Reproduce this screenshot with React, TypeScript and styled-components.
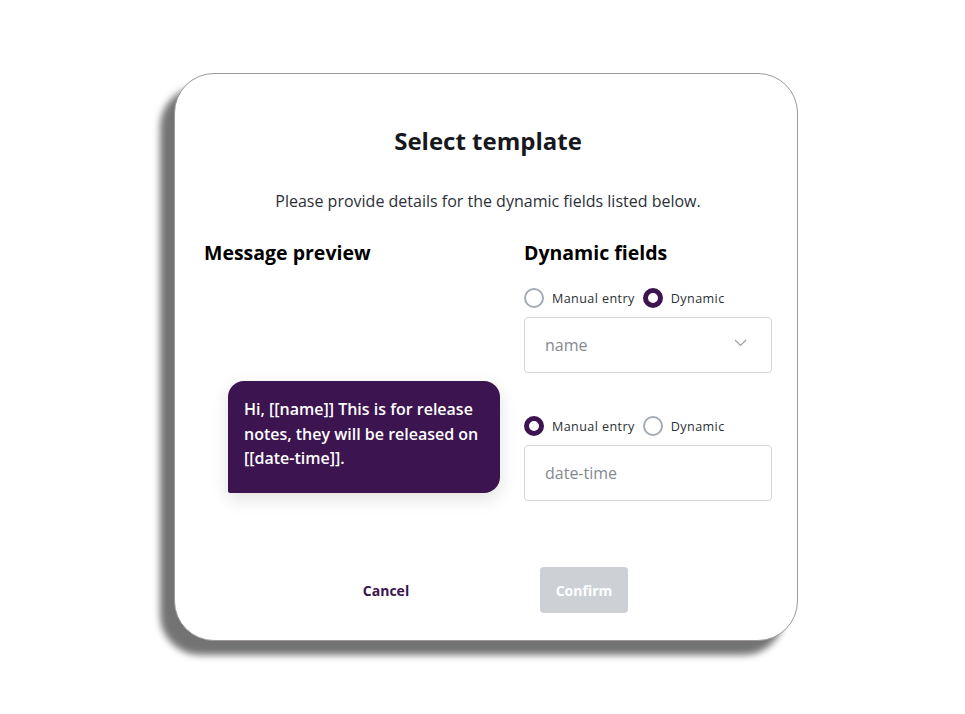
import React, { useState } from "react";
import styled, { createGlobalStyle } from "styled-components";

const GlobalStyle = createGlobalStyle`
  html, body {
    margin: 0;
    padding: 0;
    background: #ffffff;
    font-family: "Open Sans", "Noto Sans", sans-serif;
  }
`;

const Page = styled("div")`
  height: 714px;
  display: flex;
  align-items: center;
  justify-content: center;
  padding-left: 7px;
  box-sizing: border-box;
`;

const Modal = styled("div")`
  width: 624px;
  height: 568px;
  box-sizing: border-box;
  background: #ffffff;
  border: 1px solid #9d979b;
  border-radius: 40px;
  box-shadow: -14px 14px 7px rgba(0, 0, 0, 0.55);
  padding: 51px 25px 0 29px;
  display: flex;
  flex-direction: column;
`;

const Title = styled("h1")`
  margin: 0;
  text-align: center;
  font-size: 24px;
  line-height: 32px;
  font-weight: 700;
  color: #16181d;
`;

const Subtitle = styled("p")`
  margin: 33px 0 0;
  text-align: center;
  font-size: 16px;
  line-height: 22px;
  color: #2c3038;
`;

const Columns = styled("div")`
  display: grid;
  grid-template-columns: 296px 248px;
  column-gap: 24px;
  margin-top: 28px;
`;

const Column = styled("div")`
  display: flex;
  flex-direction: column;
`;

const Heading = styled("h2")`
  margin: 0;
  font-size: 19.5px;
  line-height: 26px;
  font-weight: 700;
  color: #000000;
`;

const Bubble = styled("div")`
  margin: 115px 0 0 24px;
  padding: 16px 16px 22px;
  background: #3c1450;
  color: #ffffff;
  font-size: 16px;
  line-height: 24.5px;
  font-weight: 600;
  border-radius: 16px 16px 16px 2px;
  box-shadow: 0 6px 18px rgba(0, 0, 0, 0.12);
`;

const RadioRow = styled("div")<{ $first?: boolean }>`
  display: flex;
  align-items: center;
  gap: 8px;
  margin-top: ${(p) => (p.$first ? "22px" : "43px")};
  height: 20px;
`;

const RadioOption = styled("label")`
  display: flex;
  align-items: center;
  gap: 8px;
  font-size: 12.6px;
  letter-spacing: 0.4px;
  color: #2b2f36;
  cursor: pointer;
`;

const RadioDot = styled("span")<{ $checked: boolean }>`
  width: 20px;
  height: 20px;
  box-sizing: border-box;
  border-radius: 50%;
  border: ${(p) => (p.$checked ? "5px solid #3c1450" : "2px solid #a5abb3")};
  background: #ffffff;
  flex-shrink: 0;
`;

const Field = styled("div")`
  margin-top: 9px;
  height: 56px;
  box-sizing: border-box;
  border: 1px solid #d3d6db;
  border-radius: 4px;
  display: flex;
  align-items: center;
  justify-content: space-between;
  padding: 0 24px 0 20px;
  font-size: 16px;
  color: #858a91;
`;

const Chevron = styled("svg")`
  width: 13px;
  height: 8px;
  margin-bottom: 4px;
`;

const Footer = styled("div")`
  margin-top: 66px;
  padding-right: 6px;
  display: flex;
  justify-content: center;
  align-items: center;
  gap: 110px;
`;

const TextButton = styled("button")`
  border: none;
  background: none;
  font-family: inherit;
  font-size: 14px;
  font-weight: 700;
  color: #3c1450;
  width: 88px;
  height: 46px;
  cursor: pointer;
`;

const PrimaryButton = styled("button")`
  border: none;
  border-radius: 4px;
  background: #cdd1d6;
  font-family: inherit;
  font-size: 14px;
  font-weight: 700;
  color: #ffffff;
  width: 88px;
  height: 46px;
`;

type Mode = "manual" | "dynamic";

function RadioGroup({ value, onChange, first }: { value: Mode; onChange: (m: Mode) => void; first?: boolean }) {
  return (
    <RadioRow $first={first}>
      <RadioOption onClick={() => onChange("manual")}>
        <RadioDot $checked={value === "manual"} />
        Manual entry
      </RadioOption>
      <RadioOption onClick={() => onChange("dynamic")}>
        <RadioDot $checked={value === "dynamic"} />
        Dynamic
      </RadioOption>
    </RadioRow>
  );
}

export default function App() {
  const [nameMode, setNameMode] = useState<Mode>("dynamic");
  const [dateMode, setDateMode] = useState<Mode>("manual");

  return (
    <Page>
      <GlobalStyle />
      <Modal>
        <Title>Select template</Title>
        <Subtitle>Please provide details for the dynamic fields listed below.</Subtitle>
        <Columns>
          <Column>
            <Heading>Message preview</Heading>
            <Bubble>
              Hi, [[name]] This is for release notes, they will be released on [[date-time]].
            </Bubble>
          </Column>
          <Column>
            <Heading>Dynamic fields</Heading>
            <RadioGroup value={nameMode} onChange={setNameMode} first />
            <Field>
              name
              <Chevron viewBox="0 0 13 8" fill="none" stroke="#9aa0a7" strokeWidth="1.2">
                <path d="M1 1l5.5 5.5L12 1" />
              </Chevron>
            </Field>
            <RadioGroup value={dateMode} onChange={setDateMode} />
            <Field>date-time</Field>
          </Column>
        </Columns>
        <Footer>
          <TextButton>Cancel</TextButton>
          <PrimaryButton disabled>Confirm</PrimaryButton>
        </Footer>
      </Modal>
    </Page>
  );
}
